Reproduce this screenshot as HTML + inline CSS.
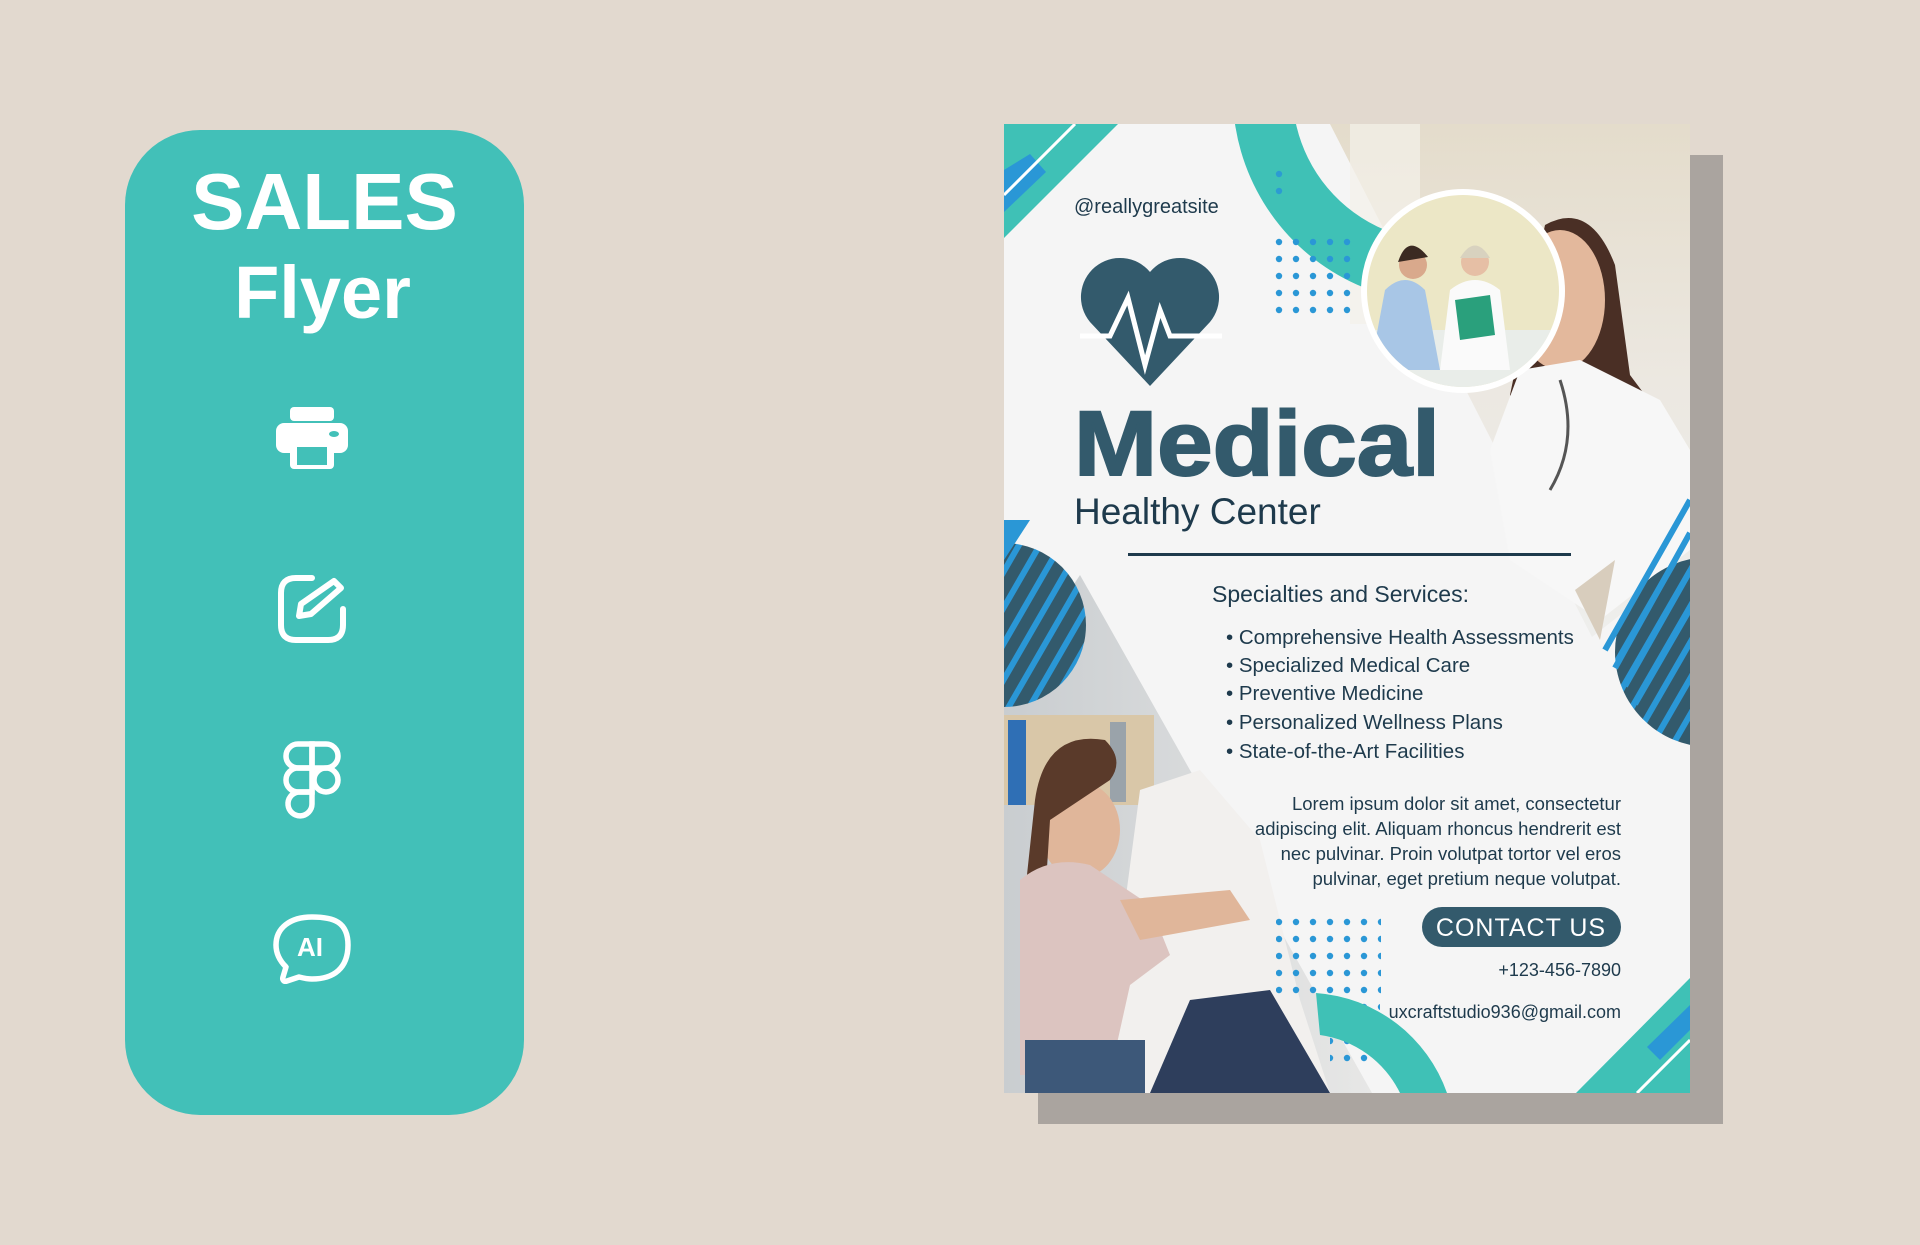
<!DOCTYPE html>
<html><head><meta charset="utf-8"><style>
html,body{margin:0;padding:0}
body{width:1920px;height:1245px;background:#e2d9cf;position:relative;overflow:hidden;font-family:"Liberation Sans",sans-serif}
.panel{position:absolute;left:125px;top:130px;width:399px;height:985px;background:#42c0b8;border-radius:75px}
.t1{position:absolute;left:0;width:100%;text-align:center;color:#fff;font-weight:bold}
.shadow{position:absolute;left:1038px;top:155px;width:685px;height:969px;background:#aaa49f}
svg.fl{position:absolute;left:1004px;top:124px}
</style></head><body>
<div class="panel">
<div class="t1" style="top:26px;font-size:80px;">SALES</div>
<div class="t1" style="top:120px;font-size:74px;left:-2px">Flyer</div>
</div>
<svg style="position:absolute;left:276px;top:405px" width="72" height="66" viewBox="0 0 72 66">
<rect x="14" y="2" width="44" height="14" rx="4" fill="#fff"/>
<rect x="0" y="18" width="72" height="30" rx="8" fill="#fff"/>
<rect x="14" y="36" width="44" height="28" rx="4" fill="#fff"/>
<rect x="21" y="42" width="30" height="18" fill="#42c0b8"/>
<ellipse cx="58" cy="29" rx="5" ry="3" fill="#42c0b8"/>
</svg>
<svg style="position:absolute;left:276px;top:573px" width="72" height="72" viewBox="0 0 72 72" fill="none" stroke="#fff" stroke-width="6" stroke-linecap="round" stroke-linejoin="round">
<path d="M36 5H20Q5 5 5 20V52Q5 67 20 67H52Q67 67 67 52V36"/>
<path d="M58 8l7 7-30 26-12 2 2-12z"/>
</svg>
<svg style="position:absolute;left:281px;top:740px" width="62" height="84" viewBox="0 0 62 84" fill="none" stroke="#fff" stroke-width="5.5">
<path d="M31 4H17a12 12 0 0 0 0 24h14z"/>
<path d="M31 4h14a12 12 0 0 1 0 24H31z"/>
<path d="M31 28H17a12 12 0 0 0 0 24h14z"/>
<circle cx="45" cy="40" r="12"/>
<path d="M31 52H17a12 12 0 1 0 14 12z"/>
</svg>
<svg style="position:absolute;left:272px;top:913px" width="80" height="74" viewBox="0 0 80 74">
<path d="M40 4C18 4 4 15 4 32c0 10 5 17 10 22l-3 10c-1 3 1 5 4 4l12-4c4 1 8 2 13 2 22 0 36-11 36-34S62 4 40 4z" fill="none" stroke="#fff" stroke-width="5.5" stroke-linejoin="round"/>
<text x="38" y="43" text-anchor="middle" font-family="Liberation Sans" font-weight="bold" font-size="26" fill="#fff">AI</text>
</svg>

<div class="shadow"></div>
<svg class="fl" width="686" height="969" viewBox="1004 124 686 969">
<defs>
<clipPath id="c"><rect x="1004" y="124" width="686" height="969"/></clipPath>
<clipPath id="circ"><circle cx="1463" cy="291" r="96"/></clipPath>
<linearGradient id="wbg" x1="0" y1="0" x2="0" y2="1"><stop offset="0" stop-color="#e4dccb"/><stop offset=".5" stop-color="#ece8e1"/><stop offset="1" stop-color="#eeeeec"/></linearGradient>
<linearGradient id="cbg" x1="0" y1="0" x2="1" y2="0"><stop offset="0" stop-color="#c9cdd0"/><stop offset="1" stop-color="#e7e7e6"/></linearGradient>
<pattern id="dots" width="17" height="17" patternUnits="userSpaceOnUse"><circle cx="4" cy="4" r="3.2" fill="#2a97d6"/></pattern>
<pattern id="str" width="18" height="18" patternUnits="userSpaceOnUse" patternTransform="rotate(30)"><rect width="18" height="18" fill="#335a6c"/><rect width="6" height="18" fill="#2a97d6"/></pattern>
</defs>
<g clip-path="url(#c)">
<rect x="1004" y="124" width="686" height="969" fill="#f5f5f5"/>
<polygon points="1330,124 1690,124 1690,560 1592,637" fill="url(#wbg)"/>
<rect x="1350" y="124" width="70" height="200" fill="#f4f1ea" opacity=".7"/>
<path d="M1545 225q45-25 70 40l15 110 30 40-20 40-90 20-40-80z" fill="#4a2f25"/>
<ellipse cx="1560" cy="300" rx="45" ry="70" fill="#e3b89c"/>
<path d="M1520 370l60-10 80 40 30 50v100l-90 70-90-60-20-110z" fill="#f7f7f7"/>
<path d="M1560 380q20 60 -10 110" stroke="#555" stroke-width="3" fill="none"/>
<polygon points="1575,590 1615,560 1600,640" fill="#d8cdbd"/>
<polygon points="1004,690 1080,575 1372,1093 1004,1093" fill="url(#cbg)"/>
<rect x="1004" y="715" width="150" height="90" fill="#d9c7a8"/>
<rect x="1008" y="720" width="18" height="85" fill="#2f6fb5"/>
<rect x="1110" y="722" width="16" height="80" fill="#9aa3aa"/>
<path d="M1140 790l60-20 60 70 40 160 30 93H1100z" fill="#f2f0ee"/>
<path d="M1190 1000l80-10 60 103H1150z" fill="#2e3e5c"/>
<ellipse cx="1080" cy="830" rx="40" ry="48" fill="#e0b69a"/>
<path d="M1035 800q10-70 70-60 20 20 5 40l-60 40 -5 80-25 40z" fill="#5a3a2a"/>
<path d="M1020 880q30-25 70-15l60 40 20 50-40 30-20 90H1020z" fill="#dcc4c0"/>
<rect x="1025" y="1040" width="120" height="53" fill="#3d5879"/>
<path d="M1120 900l110-10 20 30-110 20z" fill="#e0b69a"/>
<circle cx="1004" cy="625" r="82" fill="url(#str)"/>
<polygon points="1004,520 1030,520 1004,560" fill="#2a97d6"/>
<circle cx="1710" cy="652" r="95" fill="url(#str)"/>
<path d="M1605 650l85-150M1615 668l75-135M1625 686l65-115M1635 704l55-95" stroke="#2a97d6" stroke-width="6"/>
<polygon points="1004,124 1118,124 1004,238" fill="#3fc1b6"/>
<polygon points="1004,170 1030,154 1046,172 1004,212" fill="#2a97d6"/>
<line x1="1075" y1="124" x2="1004" y2="195" stroke="#fff" stroke-width="3"/>
<path d="M1235 124 A210 210 0 0 0 1370 290 L1385 230 A150 150 0 0 1 1296 124Z" fill="#3fc1b6"/>
<rect x="1268" y="166" width="20" height="30" fill="url(#dots)" opacity=".9"/>
<rect x="1268" y="233" width="90" height="85" fill="url(#dots)"/>
<rect x="1276" y="910" width="105" height="85" fill="url(#dots)"/>
<rect x="1330" y="995" width="50" height="70" fill="url(#dots)"/>
<path d="M1316 993 A150 150 0 0 1 1447 1093 L1400 1093 A105 105 0 0 0 1320 1035Z" fill="#3fc1b6"/>
<polygon points="1690,978 1690,1093 1576,1093" fill="#3fc1b6"/>
<polygon points="1690,1005 1690,1030 1660,1060 1647,1047" fill="#2a97d6"/>
<line x1="1690" y1="1040" x2="1637" y2="1093" stroke="#fff" stroke-width="3"/>
<circle cx="1463" cy="291" r="102" fill="#fff"/>
<g clip-path="url(#circ)">
<rect x="1360" y="190" width="210" height="210" fill="#ece7c6"/>
<rect x="1360" y="330" width="210" height="80" fill="#e9ede9"/>
<path d="M1385 290q20-20 40 0l15 80h-70z" fill="#a8c6e6"/>
<circle cx="1413" cy="265" r="14" fill="#d9a98c"/>
<path d="M1398 262q10-30 30-5z" fill="#3b2a22"/>
<path d="M1450 290q25-20 50 0l10 80h-70z" fill="#fafafa"/>
<circle cx="1475" cy="262" r="14" fill="#e6bfa5"/>
<path d="M1460 258q15-25 30 0z" fill="#d8d2bf"/>
<polygon points="1455,300 1490,295 1495,335 1460,340" fill="#2aa07c"/>
</g>
</g>
<path d="M1150 386 L1090 322 A37 37 0 0 1 1150 272 A37 37 0 0 1 1210 322Z" fill="#335a6c"/>
<path d="M1080 336 H1110 L1128 298 L1145 365 L1160 310 L1170 336 H1222" fill="none" stroke="#fff" stroke-width="5" stroke-linejoin="miter"/>
<text x="1074" y="213" font-family="Liberation Sans" font-size="20" fill="#1e3a4c">@reallygreatsite</text>
<text x="1074" y="475" font-family="Liberation Sans" font-weight="bold" font-size="92" fill="#335a6c" textLength="366" lengthAdjust="spacingAndGlyphs" stroke="#335a6c" stroke-width="2">Medical</text>
<text x="1074" y="524" font-family="Liberation Sans" font-size="37" fill="#1e3a4c">Healthy Center</text>
<rect x="1128" y="553" width="443" height="3" fill="#1e3a4c"/>
<text x="1212" y="602" font-family="Liberation Sans" font-size="23" fill="#1e3a4c">Specialties and Services:</text>
<g font-family="Liberation Sans" font-size="20.5" fill="#1e3a4c">
<text x="1226" y="644">•  Comprehensive Health Assessments</text>
<text x="1226" y="672">•  Specialized Medical Care</text>
<text x="1226" y="700">•  Preventive Medicine</text>
<text x="1226" y="729">•  Personalized Wellness Plans</text>
<text x="1226" y="758">•  State-of-the-Art Facilities</text>
</g>
<g font-family="Liberation Sans" font-size="18.5" fill="#1e3a4c" text-anchor="end">
<text x="1621" y="810">Lorem ipsum dolor sit amet, consectetur</text>
<text x="1621" y="835">adipiscing elit. Aliquam rhoncus hendrerit est</text>
<text x="1621" y="860">nec pulvinar. Proin volutpat tortor vel eros</text>
<text x="1621" y="885">pulvinar, eget pretium neque volutpat.</text>
</g>
<rect x="1422" y="907" width="199" height="40" rx="20" fill="#335a6c"/>
<text x="1521" y="936" text-anchor="middle" font-family="Liberation Sans" font-size="25" fill="#fff" letter-spacing="1">CONTACT US</text>
<text x="1621" y="976" text-anchor="end" font-family="Liberation Sans" font-size="18" fill="#1e3a4c">+123-456-7890</text>
<text x="1621" y="1018" text-anchor="end" font-family="Liberation Sans" font-size="18" fill="#1e3a4c">uxcraftstudio936@gmail.com</text>
</svg>
</body></html>
